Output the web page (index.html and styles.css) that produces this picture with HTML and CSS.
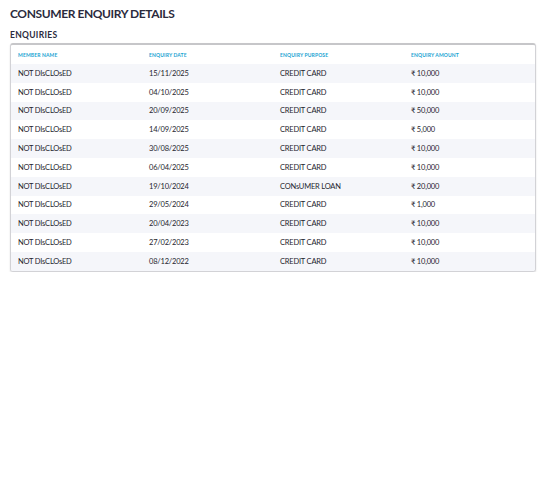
FILE: index.html
```html
<!DOCTYPE html>
<html>
<head>
<meta charset="utf-8">
<link rel="stylesheet" href="styles.css">
</head>
<body>
<div class="page">
  <h1 class="title">CONSUMER ENQUIRY DETAILS</h1>
  <h2 class="subtitle">ENQUIRIES</h2>
  <div class="card">
    <table class="tbl">
      <thead>
        <tr><th>MEMBER NAME</th><th>ENQUIRY DATE</th><th>ENQUIRY PURPOSE</th><th>ENQUIRY AMOUNT</th></tr>
      </thead>
      <tbody>
        <tr><td>NOT DIsCLOsED</td><td>15/11/2025</td><td>CREDIT CARD</td><td>₹ 10,000</td></tr>
        <tr><td>NOT DIsCLOsED</td><td>04/10/2025</td><td>CREDIT CARD</td><td>₹ 10,000</td></tr>
        <tr><td>NOT DIsCLOsED</td><td>20/09/2025</td><td>CREDIT CARD</td><td>₹ 50,000</td></tr>
        <tr><td>NOT DIsCLOsED</td><td>14/09/2025</td><td>CREDIT CARD</td><td>₹ 5,000</td></tr>
        <tr><td>NOT DIsCLOsED</td><td>30/08/2025</td><td>CREDIT CARD</td><td>₹ 10,000</td></tr>
        <tr><td>NOT DIsCLOsED</td><td>06/04/2025</td><td>CREDIT CARD</td><td>₹ 10,000</td></tr>
        <tr><td>NOT DIsCLOsED</td><td>19/10/2024</td><td>CONsUMER LOAN</td><td>₹ 20,000</td></tr>
        <tr><td>NOT DIsCLOsED</td><td>29/05/2024</td><td>CREDIT CARD</td><td>₹ 1,000</td></tr>
        <tr><td>NOT DIsCLOsED</td><td>20/04/2023</td><td>CREDIT CARD</td><td>₹ 10,000</td></tr>
        <tr><td>NOT DIsCLOsED</td><td>27/02/2023</td><td>CREDIT CARD</td><td>₹ 10,000</td></tr>
        <tr><td>NOT DIsCLOsED</td><td>08/12/2022</td><td>CREDIT CARD</td><td>₹ 10,000</td></tr>
      </tbody>
    </table>
  </div>
</div>
</body>
</html>
```
FILE: styles.css
```css
html, body {
  margin: 0;
  padding: 0;
  background: #ffffff;
}
body {
  font-family: "Lato", "Liberation Sans", sans-serif;
  color: #222233;
}
.page {
  padding: 7px 10px 0 10px;
  width: 526px;
}
.title {
  margin: 0;
  font-size: 12px;
  line-height: 14px;
  font-weight: 700;
  color: #2b2b3d;
  letter-spacing: -0.4px;
}
.subtitle {
  margin: 10px 0 3px 0;
  font-size: 8.5px;
  line-height: 9px;
  font-weight: 700;
  color: #2b2b3d;
  letter-spacing: 0.3px;
}
.card {
  border: 1px solid #d2d2d6;
  border-top: 2px solid #c6c6c9;
  border-radius: 3px;
  box-shadow: 0 1px 2px rgba(0,0,0,0.12);
  overflow: hidden;
}
.tbl {
  width: 100%;
  border-collapse: collapse;
  table-layout: fixed;
}
.tbl th {
  text-align: left;
  font-size: 5px;
  font-weight: 700;
  color: #1aa3d2;
  height: 19px;
  padding: 0 0 0 7px;
  letter-spacing: 0.15px;
}
.tbl td {
  font-size: 7.5px;
  color: #1e1e2e;
  height: 18.8px;
  padding: 0 0 0 7px;
  letter-spacing: -0.2px;
}
.tbl tbody tr:nth-child(odd) {
  background: #f5f6fa;
}
```
